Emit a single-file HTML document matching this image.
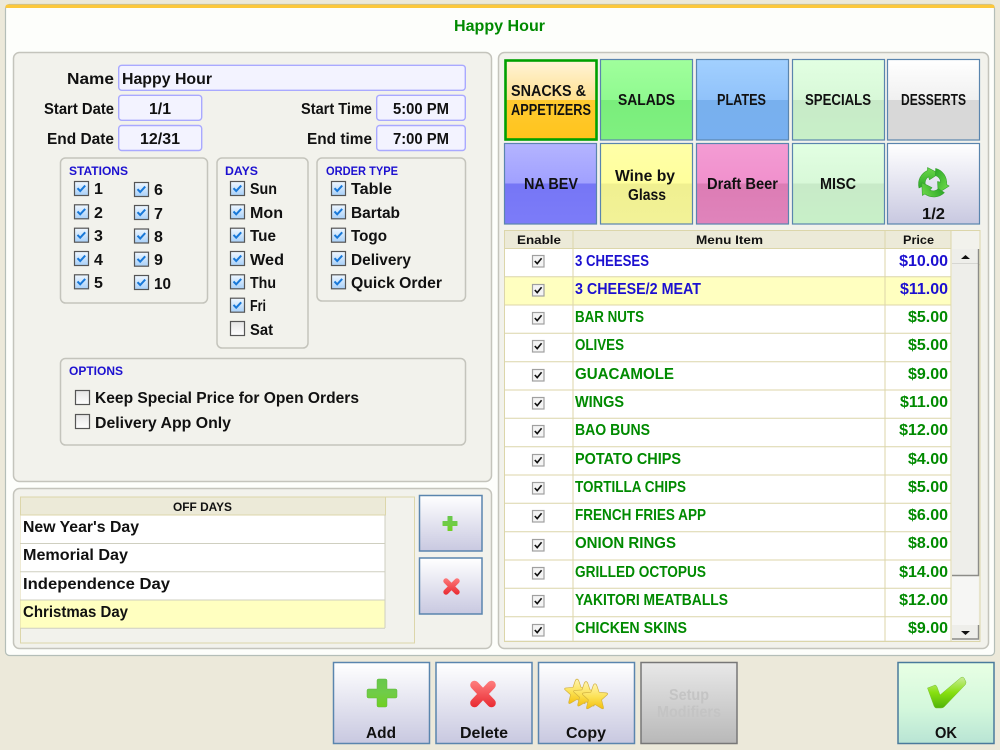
<!DOCTYPE html>
<html><head><meta charset="utf-8"><title>Happy Hour</title>
<style>
html,body{margin:0;padding:0;background:#ece9da;width:1000px;height:750px;overflow:hidden}
svg{display:block;filter:blur(.3px)}
text{font-family:"Liberation Sans",sans-serif;font-weight:bold;font-size:16px;fill:#111}
.s{font-size:12px}
.h{font-size:12px;fill:#1c10d0}
.b{fill:#1c10d0}
.g{fill:#008a00}
.m{text-anchor:middle}
.e{text-anchor:end}
.p{fill:#f2f2ec;stroke:#c4c4bc;stroke-width:1.5}
.f{fill:#f3f3ff;stroke:#a9a9ff;stroke-width:1.4}
.l{stroke:#dcd6aa;stroke-width:1;fill:none}
.btn{fill:url(#gb);stroke:#5a85ae;stroke-width:1.5}
</style></head><body>
<svg width="1000" height="750" viewBox="0 0 1000 750" xmlns="http://www.w3.org/2000/svg">
<defs>
<linearGradient id="gb" x1="0" y1="0" x2="0" y2="1"><stop offset="0" stop-color="#fff"/><stop offset="1" stop-color="#c8c8e0"/></linearGradient>
<linearGradient id="gok" x1="0" y1="0" x2="0" y2="1"><stop offset="0" stop-color="#e8ffe4"/><stop offset=".55" stop-color="#d4f8dc"/><stop offset="1" stop-color="#b8e4d4"/></linearGradient>
<linearGradient id="gdis" x1="0" y1="0" x2="0" y2="1"><stop offset="0" stop-color="#e8e8e8"/><stop offset="1" stop-color="#b8b8b8"/></linearGradient>
<linearGradient id="g1" x1="0" y1="0" x2="0" y2="1"><stop offset="0" stop-color="#fff4d8"/><stop offset=".5" stop-color="#ffe090"/><stop offset=".5" stop-color="#ffca30"/><stop offset="1" stop-color="#ffc41c"/></linearGradient>
<linearGradient id="g2" x1="0" y1="0" x2="0" y2="1"><stop offset="0" stop-color="#a0ff9c"/><stop offset=".5" stop-color="#90fa90"/><stop offset=".5" stop-color="#7aee7c"/><stop offset="1" stop-color="#80f080"/></linearGradient>
<linearGradient id="g3" x1="0" y1="0" x2="0" y2="1"><stop offset="0" stop-color="#a2d0ff"/><stop offset=".5" stop-color="#90c2fa"/><stop offset=".5" stop-color="#78b0ee"/><stop offset="1" stop-color="#78b0f0"/></linearGradient>
<linearGradient id="g4" x1="0" y1="0" x2="0" y2="1"><stop offset="0" stop-color="#e2ffe2"/><stop offset=".5" stop-color="#d8f8d8"/><stop offset=".5" stop-color="#c8eac8"/><stop offset="1" stop-color="#c8f0c8"/></linearGradient>
<linearGradient id="g5" x1="0" y1="0" x2="0" y2="1"><stop offset="0" stop-color="#fff"/><stop offset=".5" stop-color="#f0f0f0"/><stop offset=".5" stop-color="#d8d8d8"/><stop offset="1" stop-color="#d8d8d8"/></linearGradient>
<linearGradient id="g6" x1="0" y1="0" x2="0" y2="1"><stop offset="0" stop-color="#b4b4ff"/><stop offset=".5" stop-color="#a0a0ff"/><stop offset=".5" stop-color="#7676f6"/><stop offset="1" stop-color="#7c7cf8"/></linearGradient>
<linearGradient id="g7" x1="0" y1="0" x2="0" y2="1"><stop offset="0" stop-color="#ffffa8"/><stop offset=".5" stop-color="#ffff9c"/><stop offset=".5" stop-color="#f0f090"/><stop offset="1" stop-color="#f2f298"/></linearGradient>
<linearGradient id="g8" x1="0" y1="0" x2="0" y2="1"><stop offset="0" stop-color="#f49cd4"/><stop offset=".5" stop-color="#f090cc"/><stop offset=".5" stop-color="#dc7cb4"/><stop offset="1" stop-color="#e084bc"/></linearGradient>
<linearGradient id="ck" x1="0" y1="0" x2="0" y2="1"><stop offset="0" stop-color="#f0f8ff"/><stop offset="1" stop-color="#a8d0f8"/></linearGradient>
<linearGradient id="cu" x1="0" y1="0" x2="0" y2="1"><stop offset="0" stop-color="#e4e4e4"/><stop offset="1" stop-color="#fff"/></linearGradient>
<linearGradient id="gp" x1="0" y1="0" x2="0" y2="1"><stop offset="0" stop-color="#68c84c"/><stop offset=".5" stop-color="#70cc48"/><stop offset="1" stop-color="#70d020"/></linearGradient>
<linearGradient id="gx1" gradientUnits="userSpaceOnUse" x1="0" y1="680" x2="0" y2="708"><stop offset="0" stop-color="#ff8080"/><stop offset="1" stop-color="#e82830"/></linearGradient>
<linearGradient id="gx2" gradientUnits="userSpaceOnUse" x1="0" y1="577" x2="0" y2="595"><stop offset="0" stop-color="#ff8080"/><stop offset="1" stop-color="#e82830"/></linearGradient>
<linearGradient id="gs" x1="0" y1="0" x2="0" y2="1"><stop offset="0" stop-color="#fff4b0"/><stop offset=".55" stop-color="#fbe050"/><stop offset="1" stop-color="#f4c010"/></linearGradient>
<linearGradient id="gc" x1="0" y1="0" x2="0" y2="1"><stop offset="0" stop-color="#c8ec98"/><stop offset=".5" stop-color="#88e010"/><stop offset="1" stop-color="#50b408"/></linearGradient>
<linearGradient id="gr" x1="0" y1="0" x2="0" y2="1"><stop offset="0" stop-color="#6cd848"/><stop offset="1" stop-color="#2ca828"/></linearGradient>
<g id="on"><rect x=".5" y=".5" width="14" height="14" fill="url(#ck)" stroke="#555" stroke-width="1.2"/><path d="M3.5 7.2 L6.2 10 L11.2 4.6" fill="none" stroke="#1878d8" stroke-width="2"/></g>
<g id="off"><rect x=".5" y=".5" width="14" height="14" fill="url(#cu)" stroke="#555" stroke-width="1.2"/></g>
<g id="sm"><rect x=".5" y=".5" width="11.5" height="11.5" fill="#f4f4f4" stroke="#a0a0a0" stroke-width="1.2"/><path d="M2.8 6 L5.2 8.6 L9.6 3.2" fill="none" stroke="#111" stroke-width="1.6"/></g>
<path id="star" d="M0 -14 Q1.2 -14 2 -12 L4.4 -5 L12 -4.4 Q14.5 -4 13 -2.4 L7 3 L9 11 Q9.4 13.4 7 12.2 L0 8 L-7 12.2 Q-9.4 13.4 -9 11 L-7 3 L-13 -2.4 Q-14.5 -4 -12 -4.4 L-4.4 -5 L-2 -12 Q-1.2 -14 0 -14 Z" fill="url(#gs)" stroke="#d0b040" stroke-width=".7" stroke-linejoin="round"/>
<path id="arr" d="M-14 5 A15 15 0 0 1 -5.5 -12.5 L-5.5 -15.5 L6 -9.5 L-3.5 -3.2 L-4.5 -6.2 A7 7 0 0 0 -7.6 1.8 Z" fill="url(#gr)" stroke="#38a030" stroke-width=".6" stroke-linejoin="round"/>
</defs>

<rect width="1000" height="750" fill="#ece9da"/>
<rect x="5.5" y="4.5" width="989" height="651" rx="4" fill="#fdfefb" stroke="#b4beb8" stroke-width="1.2"/>
<path d="M5.5 7 Q5.5 4.5 8 4.5 H992 Q994.5 4.5 994.5 7 V8 H5.5 Z" fill="#fcc83c"/>
<text x="454" y="31" class="g" textLength="91" lengthAdjust="spacingAndGlyphs">Happy Hour</text>

<rect class="p" x="13.5" y="52.5" width="478" height="429" rx="6"/>
<rect class="p" x="13.5" y="488.5" width="478" height="160" rx="6"/>
<rect class="p" x="498.5" y="52.5" width="490" height="596" rx="6"/>

<text x="67" y="84" textLength="47" lengthAdjust="spacingAndGlyphs">Name</text>
<rect class="f" x="118.7" y="65.3" width="346.6" height="25" rx="3"/>
<text x="122" y="84" textLength="90" lengthAdjust="spacingAndGlyphs">Happy Hour</text>
<text x="44" y="114" textLength="70" lengthAdjust="spacingAndGlyphs">Start Date</text>
<rect class="f" x="118.7" y="95.3" width="83" height="25" rx="3"/>
<text x="149" y="114" textLength="22" lengthAdjust="spacingAndGlyphs">1/1</text>
<text x="47" y="144" textLength="67" lengthAdjust="spacingAndGlyphs">End Date</text>
<rect class="f" x="118.7" y="125.5" width="83" height="25" rx="3"/>
<text x="140" y="144" textLength="40" lengthAdjust="spacingAndGlyphs">12/31</text>
<text x="301" y="114" textLength="71" lengthAdjust="spacingAndGlyphs">Start Time</text>
<rect class="f" x="376.7" y="95.3" width="88.6" height="25" rx="3"/>
<text x="393" y="114" textLength="56" lengthAdjust="spacingAndGlyphs">5:00 PM</text>
<text x="307" y="144" textLength="65" lengthAdjust="spacingAndGlyphs">End time</text>
<rect class="f" x="376.7" y="125.5" width="88.6" height="25" rx="3"/>
<text x="393" y="144" textLength="56" lengthAdjust="spacingAndGlyphs">7:00 PM</text>

<rect class="p" x="60.5" y="158" width="147" height="145" rx="5"/>
<rect class="p" x="217" y="158" width="91" height="190" rx="5"/>
<rect class="p" x="317" y="158" width="148.5" height="143" rx="5"/>
<rect class="p" x="60.5" y="358.5" width="405" height="86.5" rx="5"/>

<text class="h" x="69" y="175" textLength="59" lengthAdjust="spacingAndGlyphs">STATIONS</text>
<text class="h" x="225" y="175" textLength="33" lengthAdjust="spacingAndGlyphs">DAYS</text>
<text class="h" x="326" y="175" textLength="72" lengthAdjust="spacingAndGlyphs">ORDER TYPE</text>
<text class="h" x="69" y="375" textLength="54" lengthAdjust="spacingAndGlyphs">OPTIONS</text>

<use href="#on" x="74" y="181"/><text x="94" y="194">1</text>
<use href="#on" x="74" y="204.3"/><text x="94" y="218">2</text>
<use href="#on" x="74" y="227.7"/><text x="94" y="241">3</text>
<use href="#on" x="74" y="251"/><text x="94" y="265">4</text>
<use href="#on" x="74" y="274.3"/><text x="94" y="288">5</text>
<use href="#on" x="134" y="182"/><text x="154" y="195">6</text>
<use href="#on" x="134" y="205"/><text x="154" y="219">7</text>
<use href="#on" x="134" y="228.5"/><text x="154" y="242">8</text>
<use href="#on" x="134" y="251.7"/><text x="154" y="265">9</text>
<use href="#on" x="134" y="275"/><text x="154" y="289" textLength="17" lengthAdjust="spacingAndGlyphs">10</text>

<use href="#on" x="230" y="181"/><text x="250" y="194" textLength="27" lengthAdjust="spacingAndGlyphs">Sun</text>
<use href="#on" x="230" y="204.3"/><text x="250" y="218" textLength="33" lengthAdjust="spacingAndGlyphs">Mon</text>
<use href="#on" x="230" y="227.7"/><text x="250" y="241" textLength="26" lengthAdjust="spacingAndGlyphs">Tue</text>
<use href="#on" x="230" y="251"/><text x="250" y="265" textLength="34" lengthAdjust="spacingAndGlyphs">Wed</text>
<use href="#on" x="230" y="274.3"/><text x="250" y="288" textLength="26" lengthAdjust="spacingAndGlyphs">Thu</text>
<use href="#on" x="230" y="297.7"/><text x="250" y="311" textLength="16" lengthAdjust="spacingAndGlyphs">Fri</text>
<use href="#off" x="230" y="321"/><text x="250" y="335" textLength="23" lengthAdjust="spacingAndGlyphs">Sat</text>

<use href="#on" x="331" y="181"/><text x="351" y="194" textLength="41" lengthAdjust="spacingAndGlyphs">Table</text>
<use href="#on" x="331" y="204.3"/><text x="351" y="218" textLength="49" lengthAdjust="spacingAndGlyphs">Bartab</text>
<use href="#on" x="331" y="227.7"/><text x="351" y="241" textLength="36" lengthAdjust="spacingAndGlyphs">Togo</text>
<use href="#on" x="331" y="251"/><text x="351" y="265" textLength="60" lengthAdjust="spacingAndGlyphs">Delivery</text>
<use href="#on" x="331" y="274.3"/><text x="351" y="288" textLength="91" lengthAdjust="spacingAndGlyphs">Quick Order</text>

<use href="#off" x="75" y="390"/><text x="95" y="403" textLength="264" lengthAdjust="spacingAndGlyphs">Keep Special Price for Open Orders</text>
<use href="#off" x="75" y="414"/><text x="95" y="428" textLength="136" lengthAdjust="spacingAndGlyphs">Delivery App Only</text>

<!-- off days -->
<rect x="20.5" y="497" width="394" height="146" fill="#f2f2ec" stroke="#dcd6aa"/>
<rect x="20.5" y="497" width="365" height="18" fill="#ecead8" stroke="#dcd6aa"/>
<text class="s" x="173" y="511" textLength="59" lengthAdjust="spacingAndGlyphs">OFF DAYS</text>
<rect x="20.5" y="515.5" width="364.5" height="28" fill="#fff"/>
<rect x="20.5" y="543.8" width="364.5" height="28" fill="#fff"/>
<rect x="20.5" y="572" width="364.5" height="28" fill="#fff"/>
<rect x="20.5" y="600.3" width="364.5" height="28" fill="#ffffc0"/>
<path d="M20.5 543.5H385M20.5 571.7H385M20.5 600H385M20.5 628.3H385M385 515V628" stroke="#cfcfc0" fill="none"/>
<text x="23" y="532" textLength="116" lengthAdjust="spacingAndGlyphs">New Year's Day</text>
<text x="23" y="560" textLength="105" lengthAdjust="spacingAndGlyphs">Memorial Day</text>
<text x="23" y="589" textLength="147" lengthAdjust="spacingAndGlyphs">Independence Day</text>
<text x="23" y="617" textLength="105" lengthAdjust="spacingAndGlyphs">Christmas Day</text>

<rect class="btn" x="419.5" y="495.5" width="62.5" height="55.5"/>
<path d="M447.5 516.5q0-.5 .5-.5h4q.5 0 .5 .5v4.5h4.5q.5 0 .5 .5v4q0 .5-.5 .5h-4.5v4.5q0 .5-.5 .5h-4q-.5 0-.5-.5v-4.5h-4.5q-.5 0-.5-.5v-4q0-.5 .5-.5h4.5z" fill="url(#gp)"/>
<rect class="btn" x="419.5" y="558" width="62.5" height="56"/>
<path d="M446 581 L457 592 M457 581 L446 592" fill="none" stroke="url(#gx2)" stroke-width="5.4" stroke-linecap="round"/>

<!-- tabs -->
<rect x="505.5" y="60.5" width="91" height="79" fill="url(#g1)" stroke="#00a000" stroke-width="2.6"/>
<rect x="600.5" y="59.5" width="92" height="80.5" fill="url(#g2)" stroke="#5a85ae" stroke-width="1.2"/>
<rect x="696.5" y="59.5" width="92" height="80.5" fill="url(#g3)" stroke="#5a85ae" stroke-width="1.2"/>
<rect x="792.5" y="59.5" width="92" height="80.5" fill="url(#g4)" stroke="#5a85ae" stroke-width="1.2"/>
<rect x="887.5" y="59.5" width="92" height="80.5" fill="url(#g5)" stroke="#5a85ae" stroke-width="1.2"/>
<rect x="504.5" y="143.5" width="92" height="80.5" fill="url(#g6)" stroke="#5a85ae" stroke-width="1.2"/>
<rect x="600.5" y="143.5" width="92" height="80.5" fill="url(#g7)" stroke="#5a85ae" stroke-width="1.2"/>
<rect x="696.5" y="143.5" width="92" height="80.5" fill="url(#g8)" stroke="#5a85ae" stroke-width="1.2"/>
<rect x="792.5" y="143.5" width="92" height="80.5" fill="url(#g4)" stroke="#5a85ae" stroke-width="1.2"/>
<rect x="887.5" y="143.5" width="92" height="80.5" fill="url(#gb)" stroke="#5a85ae" stroke-width="1.2"/>
<text x="511" y="96" textLength="75" lengthAdjust="spacingAndGlyphs">SNACKS &amp;</text>
<text x="511" y="115" textLength="80" lengthAdjust="spacingAndGlyphs">APPETIZERS</text>
<text x="618" y="105" textLength="57" lengthAdjust="spacingAndGlyphs">SALADS</text>
<text x="717" y="105" textLength="49" lengthAdjust="spacingAndGlyphs">PLATES</text>
<text x="805" y="105" textLength="66" lengthAdjust="spacingAndGlyphs">SPECIALS</text>
<text x="901" y="105" textLength="65" lengthAdjust="spacingAndGlyphs">DESSERTS</text>
<text x="524" y="189" textLength="54" lengthAdjust="spacingAndGlyphs">NA BEV</text>
<text x="615" y="181" textLength="60" lengthAdjust="spacingAndGlyphs">Wine by</text>
<text x="628" y="200" textLength="38" lengthAdjust="spacingAndGlyphs">Glass</text>
<text x="707" y="189" textLength="71" lengthAdjust="spacingAndGlyphs">Draft Beer</text>
<text x="820" y="189" textLength="36" lengthAdjust="spacingAndGlyphs">MISC</text>
<text x="922" y="219" textLength="23" lengthAdjust="spacingAndGlyphs">1/2</text>
<g transform="translate(933 183)">
<use href="#arr"/>
<use href="#arr" transform="rotate(120)"/>
<use href="#arr" transform="rotate(240)"/>
</g>

<!-- menu table -->
<rect x="504.5" y="230.5" width="475.5" height="411" fill="#f2f2ec" stroke="#dcd6aa"/>
<rect x="504.5" y="230.5" width="68.5" height="18" fill="#ecead8" stroke="#dcd6aa"/>
<rect x="573" y="230.5" width="312" height="18" fill="#ecead8" stroke="#dcd6aa"/>
<rect x="885" y="230.5" width="66" height="18" fill="#ecead8" stroke="#dcd6aa"/>
<text class="s" x="517" y="244" textLength="44" lengthAdjust="spacingAndGlyphs">Enable</text>
<text class="s" x="696" y="244" textLength="67" lengthAdjust="spacingAndGlyphs">Menu Item</text>
<text class="s" x="903" y="244" textLength="31" lengthAdjust="spacingAndGlyphs">Price</text>
<rect x="505" y="249" width="446" height="391" fill="#fff"/>
<rect x="505" y="277" width="446" height="28" fill="#ffffc0"/>
<path class="l" d="M505 276.7H951M505 305H951M505 333.3H951M505 361.7H951M505 390H951M505 418.3H951M505 446.7H951M505 475H951M505 503.3H951M505 531.7H951M505 560H951M505 588.3H951M505 616.7H951M573 249V641M885 249V641M951 249V641"/>

<use href="#sm" x="532" y="255"/><text class="b" x="575" y="266" textLength="74" lengthAdjust="spacingAndGlyphs">3 CHEESES</text><text class="b e" x="948" y="266">$10.00</text>
<use href="#sm" x="532" y="284"/><text class="b" x="575" y="294" textLength="126" lengthAdjust="spacingAndGlyphs">3 CHEESE/2 MEAT</text><text class="b e" x="948" y="294">$11.00</text>
<use href="#sm" x="532" y="312"/><text class="g" x="575" y="322" textLength="69" lengthAdjust="spacingAndGlyphs">BAR NUTS</text><text class="g e" x="948" y="322">$5.00</text>
<use href="#sm" x="532" y="340"/><text class="g" x="575" y="350" textLength="49" lengthAdjust="spacingAndGlyphs">OLIVES</text><text class="g e" x="948" y="350">$5.00</text>
<use href="#sm" x="532" y="369"/><text class="g" x="575" y="379" textLength="99" lengthAdjust="spacingAndGlyphs">GUACAMOLE</text><text class="g e" x="948" y="379">$9.00</text>
<use href="#sm" x="532" y="397"/><text class="g" x="575" y="407" textLength="49" lengthAdjust="spacingAndGlyphs">WINGS</text><text class="g e" x="948" y="407">$11.00</text>
<use href="#sm" x="532" y="425"/><text class="g" x="575" y="435" textLength="75" lengthAdjust="spacingAndGlyphs">BAO BUNS</text><text class="g e" x="948" y="435">$12.00</text>
<use href="#sm" x="532" y="454"/><text class="g" x="575" y="464" textLength="106" lengthAdjust="spacingAndGlyphs">POTATO CHIPS</text><text class="g e" x="948" y="464">$4.00</text>
<use href="#sm" x="532" y="482"/><text class="g" x="575" y="492" textLength="111" lengthAdjust="spacingAndGlyphs">TORTILLA CHIPS</text><text class="g e" x="948" y="492">$5.00</text>
<use href="#sm" x="532" y="510"/><text class="g" x="575" y="520" textLength="131" lengthAdjust="spacingAndGlyphs">FRENCH FRIES APP</text><text class="g e" x="948" y="520">$6.00</text>
<use href="#sm" x="532" y="539"/><text class="g" x="575" y="548" textLength="101" lengthAdjust="spacingAndGlyphs">ONION RINGS</text><text class="g e" x="948" y="548">$8.00</text>
<use href="#sm" x="532" y="567"/><text class="g" x="575" y="577" textLength="131" lengthAdjust="spacingAndGlyphs">GRILLED OCTOPUS</text><text class="g e" x="948" y="577">$14.00</text>
<use href="#sm" x="532" y="595"/><text class="g" x="575" y="605" textLength="153" lengthAdjust="spacingAndGlyphs">YAKITORI MEATBALLS</text><text class="g e" x="948" y="605">$12.00</text>
<use href="#sm" x="532" y="624"/><text class="g" x="575" y="633" textLength="112" lengthAdjust="spacingAndGlyphs">CHICKEN SKINS</text><text class="g e" x="948" y="633">$9.00</text>

<!-- scrollbar -->
<rect x="951.5" y="249" width="27" height="391" fill="#f6f6f4"/>
<rect x="952" y="249" width="26" height="15" fill="#eeeeea"/>
<path d="M952 264.5H978.5V249" fill="none" stroke="#8c8c88" stroke-width="1.4"/>
<path d="M961 259h9l-4.5-4z" fill="#111"/>
<rect x="952" y="264" width="26" height="311" fill="#eeeeea"/>
<path d="M952 575.5H978.5V264" fill="none" stroke="#8c8c88" stroke-width="1.4"/>
<rect x="952" y="625" width="26" height="14" fill="#eeeeea"/>
<path d="M952 639H978.5V625" fill="none" stroke="#8c8c88" stroke-width="1.4"/>
<path d="M961 631h9l-4.5 4z" fill="#111"/>

<!-- bottom buttons -->
<rect class="btn" x="333.5" y="662.5" width="96" height="81"/>
<rect class="btn" x="436" y="662.5" width="96" height="81"/>
<rect class="btn" x="538.5" y="662.5" width="96" height="81"/>
<rect x="641" y="662.5" width="96" height="81" fill="url(#gdis)" stroke="#777" stroke-width="1.5"/>
<rect x="898" y="662.5" width="96" height="81" fill="url(#gok)" stroke="#4a7a9c" stroke-width="1.5"/>
<path d="M377 680.5 Q377 679 378.5 679 H385.5 Q387 679 387 680.5 V689 H395.5 Q397 689 397 690.5 V696.5 Q397 698 395.5 698 H387 V705.5 Q387 707 385.5 707 H378.5 Q377 707 377 705.5 V698 H368.5 Q367 698 367 696.5 V690.5 Q367 689 368.5 689 H377 Z" fill="url(#gp)" stroke="#60b840" stroke-width=".5"/>
<path d="M474.5 685 L491.5 703 M491.5 685 L474.5 703" fill="none" stroke="url(#gx1)" stroke-width="8.6" stroke-linecap="round"/>
<use href="#star" transform="translate(577 692) scale(.92)"/>
<use href="#star" transform="translate(586 694.5) scale(.92)"/>
<use href="#star" transform="translate(595 697) scale(.94)"/>
<path d="M927.5 688 Q933 686 935 685 Q936 685 937 687 L940 695 L961 677.5 Q963 676.5 964 678 L966 682 Q966 684 965 685 L944 707 Q943 708 941 708 L936 708 Q935 708 934 706 Z" fill="url(#gc)" stroke="#78c030" stroke-width=".5"/>
<text x="366" y="738" textLength="30" lengthAdjust="spacingAndGlyphs">Add</text>
<text x="460" y="738" textLength="48" lengthAdjust="spacingAndGlyphs">Delete</text>
<text x="566" y="738" textLength="40" lengthAdjust="spacingAndGlyphs">Copy</text>
<text x="669" y="700" textLength="40" lengthAdjust="spacingAndGlyphs" style="fill:#c4c4c4">Setup</text>
<text x="657" y="717" textLength="64" lengthAdjust="spacingAndGlyphs" style="fill:#c4c4c4">Modifiers</text>
<text x="935" y="738" textLength="22" lengthAdjust="spacingAndGlyphs">OK</text>
</svg>
</body></html>
